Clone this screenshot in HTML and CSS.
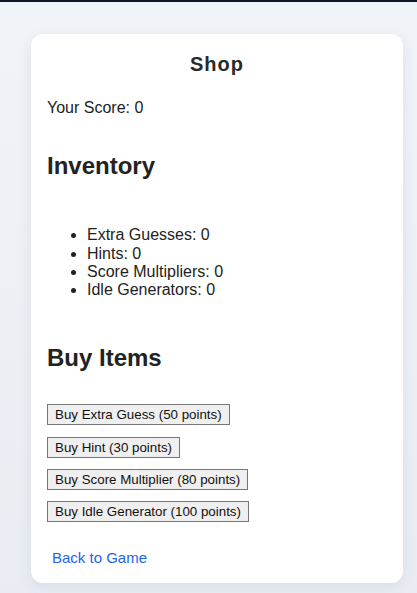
FILE: index.html
```html
<!DOCTYPE html>
<html>
<head>
<meta charset="utf-8">
<link rel="stylesheet" href="styles.css">
</head>
<body>
<div class="topbar"></div>
<main class="page">
  <section class="card">
    <h1 class="title">Shop</h1>
    <p class="score">Your Score: 0</p>
    <h2 class="heading inv-heading">Inventory</h2>
    <ul class="inventory">
      <li>Extra Guesses: 0</li>
      <li>Hints: 0</li>
      <li>Score Multipliers: 0</li>
      <li>Idle Generators: 0</li>
    </ul>
    <h2 class="heading buy-heading">Buy Items</h2>
    <div class="buttons">
      <div class="btn-row"><button class="buy">Buy Extra Guess (50 points)</button></div>
      <div class="btn-row"><button class="buy">Buy Hint (30 points)</button></div>
      <div class="btn-row"><button class="buy">Buy Score Multiplier (80 points)</button></div>
      <div class="btn-row"><button class="buy">Buy Idle Generator (100 points)</button></div>
    </div>
    <a class="back" href="#">Back to Game</a>
  </section>
</main>
</body>
</html>
```

FILE: styles.css
```css
html, body {
  margin: 0;
  padding: 0;
  height: 593px;
  overflow: hidden;
}
body {
  background: linear-gradient(180deg, #f0f3f7 0%, #e9edf3 100%);
  font-family: "Liberation Sans", Arial, sans-serif;
  color: #222;
}
.topbar {
  height: 2px;
  background: #0d1626;
}
.page {
  padding: 32px 14px 0 31px;
}
.card {
  box-sizing: border-box;
  height: 549px;
  background: #fff;
  border-radius: 12px;
  box-shadow: 0 4px 14px rgba(30, 50, 90, 0.08);
  padding: 19px 16px 0 16px;
  display: flex;
  flex-direction: column;
  align-items: flex-start;
}
.title {
  align-self: stretch;
  margin: 0;
  text-align: center;
  font-size: 20px;
  line-height: 23px;
  font-weight: bold;
  letter-spacing: 1px;
  color: #2a2a2a;
}
.score {
  margin: 23px 0 0 0;
  font-size: 16px;
  line-height: 18.4px;
}
.heading {
  margin: 0;
  font-size: 24px;
  line-height: 28px;
  font-weight: bold;
  color: #222;
}
.inv-heading {
  margin-top: 35px;
}
.inventory {
  margin: 46px 0 0 0;
  padding-left: 40px;
  font-size: 16px;
  line-height: 18.2px;
}
.buy-heading {
  margin-top: 45px;
}
.buttons {
  margin-top: 32px;
  display: flex;
  flex-direction: column;
  gap: 11.33px;
}
.btn-row {
  display: flex;
}
.buy {
  font-family: "Liberation Sans", Arial, sans-serif;
  font-size: 13.33px;
  height: 21px;
  padding: 1px 7px;
  border: 1px solid #767676;
  background: #efefef;
  color: #111;
  border-radius: 0;
}
.back {
  margin: 27px 0 0 5px;
  font-size: 15px;
  line-height: 17px;
  color: #2563eb;
  text-decoration: none;
}
```
